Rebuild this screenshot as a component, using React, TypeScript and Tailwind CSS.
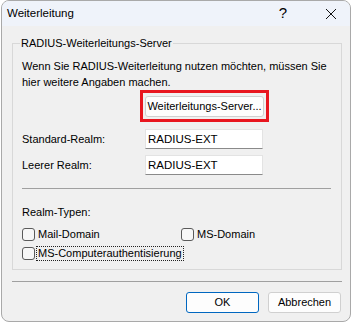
import React from "react";

function Checkbox({ label, focus }: { label: string; focus?: boolean }) {
  return (
    <div className="flex items-center h-[16px]">
      <div className="w-[13px] h-[13px] rounded-[3px] border border-[#5a5a5a] bg-[#f7f7f7]" />
      <span
        className={
          focus
            ? "ml-[2px] pl-[1px] pr-[1px] leading-[13px] outline-1 outline-dotted outline-[#222]"
            : "ml-[3px]"
        }
      >
        {label}
      </span>
    </div>
  );
}

function Field({ label, value }: { label: string; value: string }) {
  return (
    <div className="flex items-center h-[20px]">
      <div className="w-[123px]">{label}</div>
      <div className="w-[118px] h-[20px] bg-white border border-[#e3e3e3] border-b-[#8a8a8a] flex items-center pl-[2px] text-[11.5px]">
        {value}
      </div>
    </div>
  );
}

export default function App() {
  return (
    <div
      className="w-[353px] h-[324px] bg-white pl-[1px] text-[11px] text-black whitespace-nowrap"
      style={{ fontFamily: '"Liberation Sans", Arial, sans-serif' }}
    >
      <div className="w-[350px] h-[322px] border border-[#a9a9a9] rounded-[8px] overflow-hidden bg-[#f0f0f0] flex flex-col">
        <div className="h-[25px] bg-[#eff3fa] flex items-center text-[11.5px]">
          <span className="pl-[5px] pt-[1px]">Weiterleitung</span>
          <span className="ml-auto text-[15px] pr-[38px]">?</span>
          <svg width="12" height="12" viewBox="0 0 12 12" className="mr-[13px]">
            <path d="M1 1 L11 11 M11 1 L1 11" stroke="#111" strokeWidth="1" />
          </svg>
        </div>
        <div className="mt-[17px] ml-[10px] w-[330px] h-[227px] border border-[#d8d8d8] relative pt-[14px] pl-[9px] pr-[10px] leading-[16px]">
          <span className="absolute left-[7px] top-[-9px] bg-[#f0f0f0] px-[1px] leading-[16px]">
            RADIUS-Weiterleitungs-Server
          </span>
          <p>
            Wenn Sie RADIUS-Weiterleitung nutzen möchten, müssen Sie
            <br />
            hier weitere Angaben machen.
          </p>
          <div className="ml-[118px] w-[129px] h-[32px] border-[3px] border-[#e8161f] flex items-center justify-center">
            <div className="w-[119px] h-[21px] bg-[#fdfdfd] border border-[#d0d0d0] rounded-[3px] flex items-center justify-center">
              Weiterleitungs-Server...
            </div>
          </div>
          <div className="mt-[7px]">
            <Field label="Standard-Realm:" value="RADIUS-EXT" />
          </div>
          <div className="mt-[6px]">
            <Field label="Leerer Realm:" value="RADIUS-EXT" />
          </div>
          <div className="mt-[13px] h-[1px] bg-[#a0a0a0]" />
          <div className="mt-[15px]">Realm-Typen:</div>
          <div className="mt-[6px] flex">
            <div className="w-[159px]">
              <Checkbox label="Mail-Domain" />
            </div>
            <Checkbox label="MS-Domain" />
          </div>
          <div className="mt-[3px]">
            <Checkbox label="MS-Computerauthentisierung" focus />
          </div>
        </div>
        <div className="mt-[11px] ml-[10px] w-[330px] h-[1px] bg-[#a0a0a0]" />
        <div className="mt-[10px] flex justify-end pr-[9px] gap-[9px]">
          <div className="w-[73px] h-[21px] bg-[#fdfdfd] border border-[#0067c0] rounded-[3px] flex items-center justify-center">
            OK
          </div>
          <div className="w-[73px] h-[21px] bg-[#fdfdfd] border border-[#d0d0d0] rounded-[3px] flex items-center justify-center">
            Abbrechen
          </div>
        </div>
      </div>
    </div>
  );
}
